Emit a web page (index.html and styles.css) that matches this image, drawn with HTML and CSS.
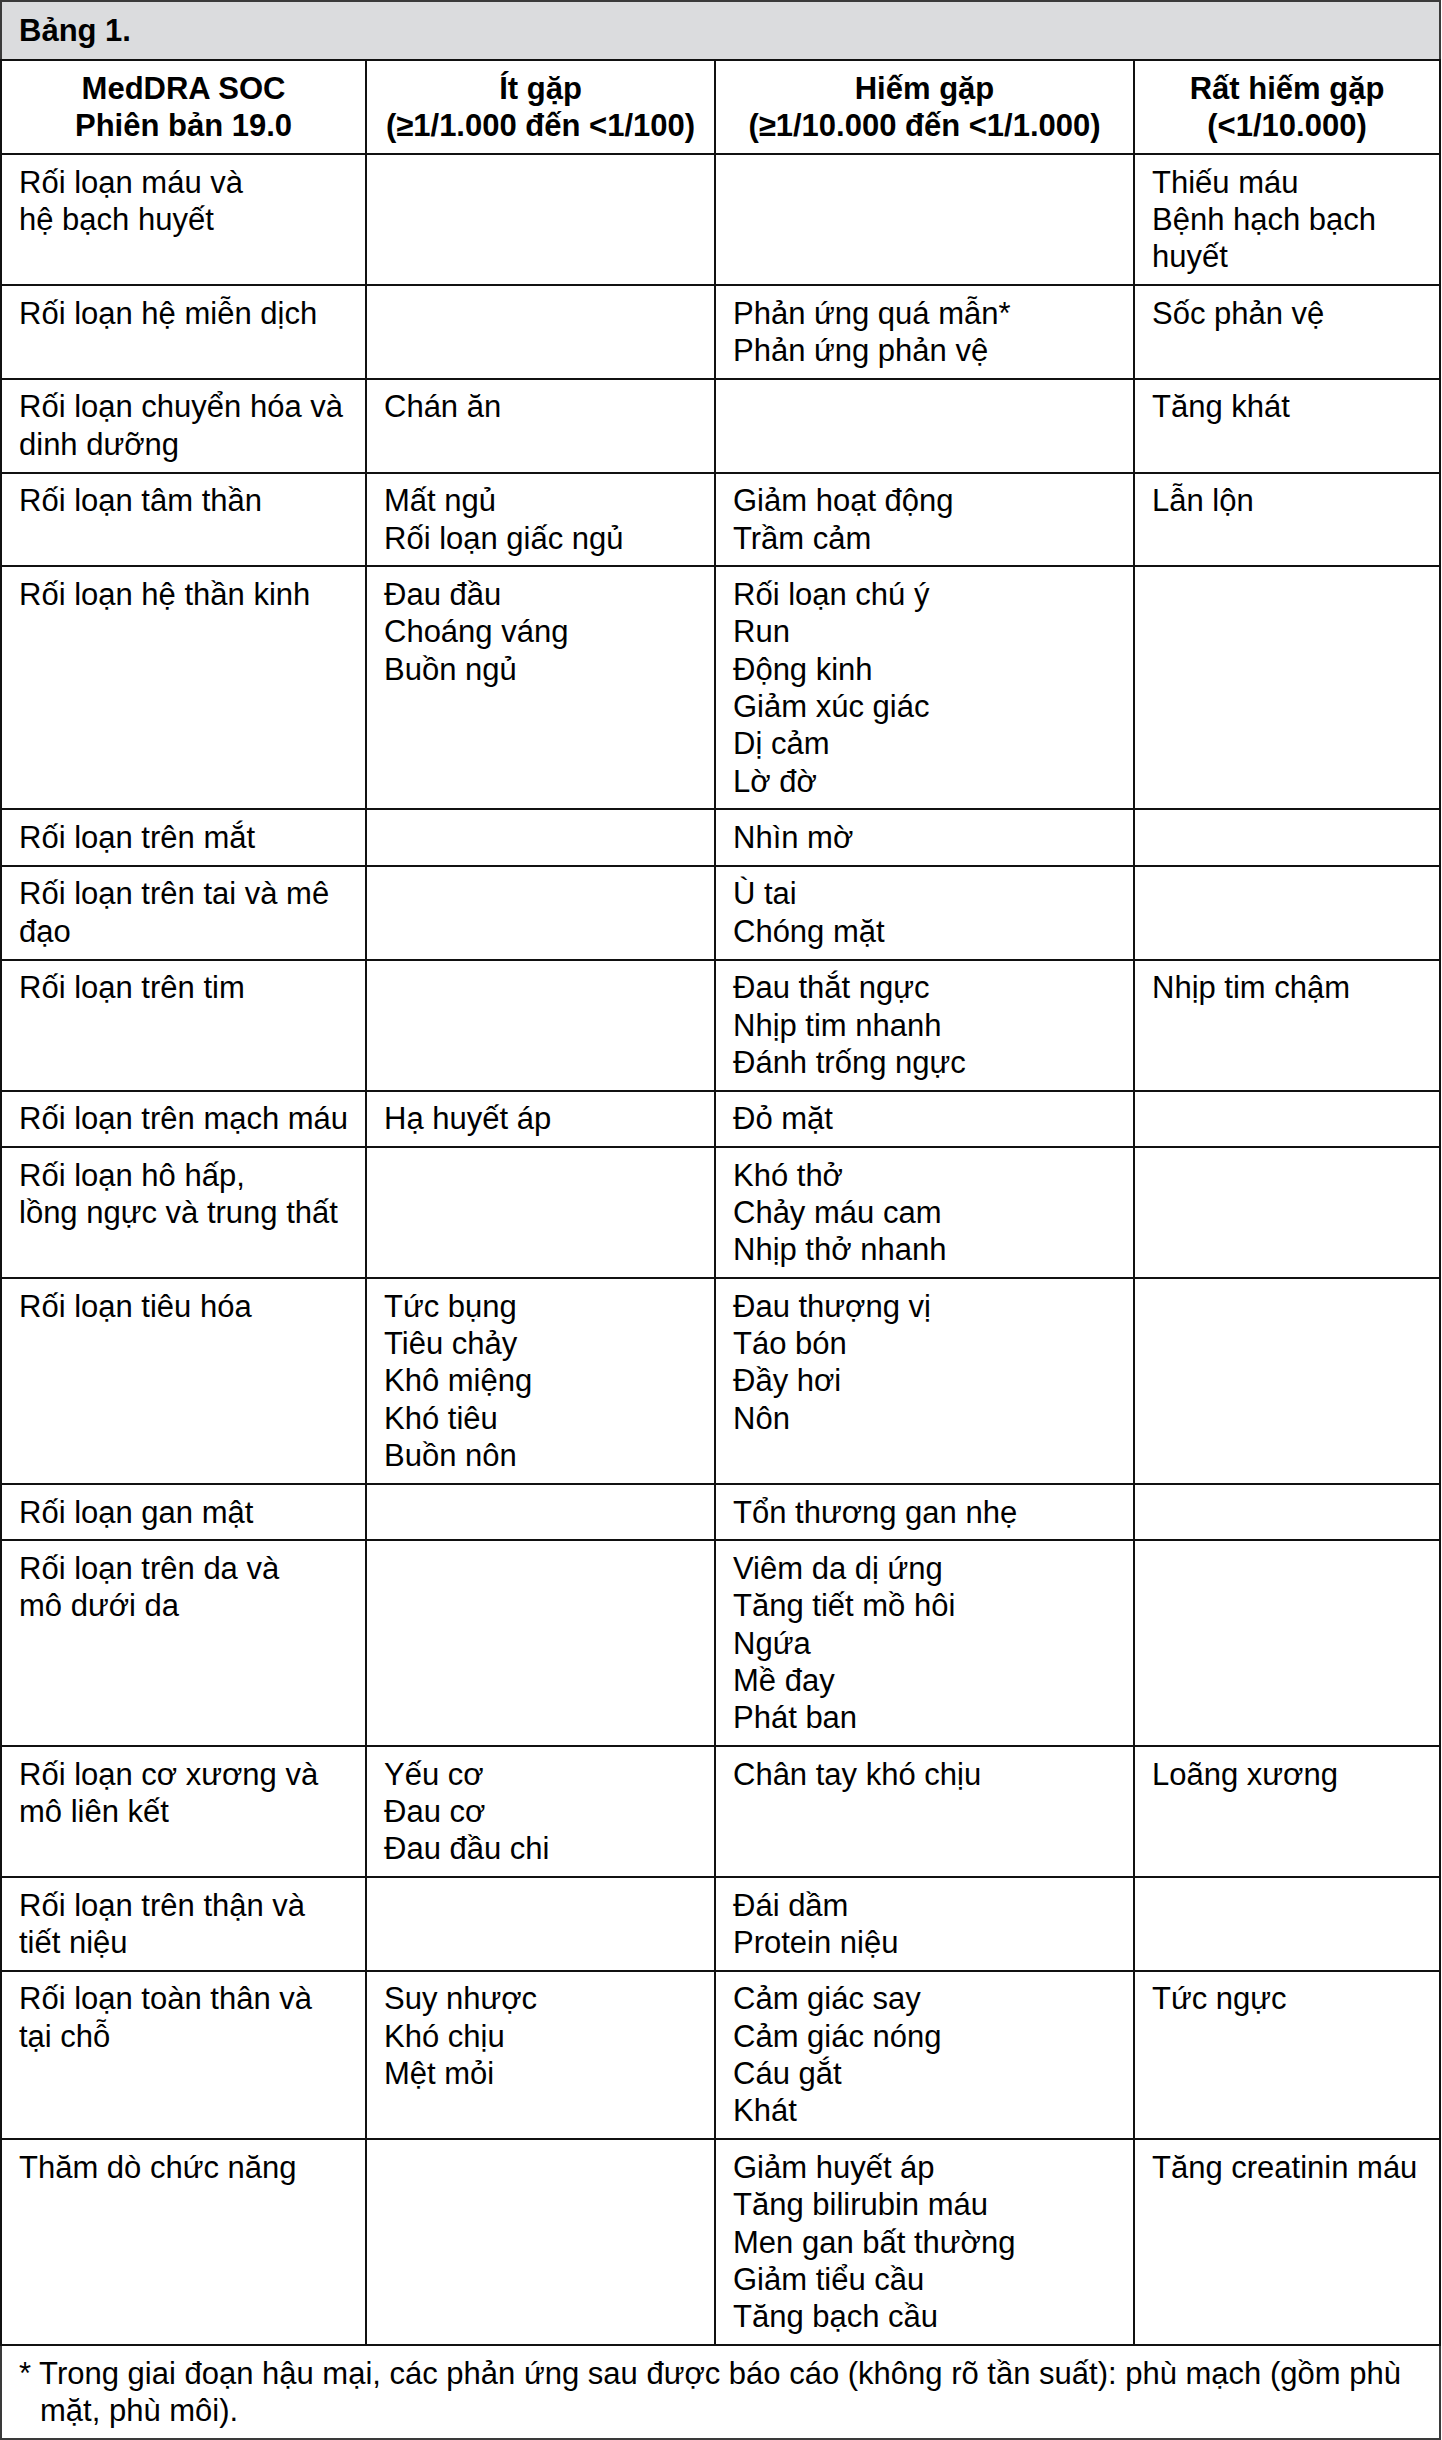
FILE: index.html
```html
<!DOCTYPE html>
<html lang="vi">
<head>
<meta charset="utf-8">
<title>Bảng 1.</title>
<link rel="stylesheet" href="styles.css">
</head>
<body>
<table class="ae-table">
  <colgroup>
    <col class="col-soc">
    <col class="col-uncommon">
    <col class="col-rare">
    <col class="col-very-rare">
  </colgroup>
  <thead>
    <tr class="title-row"><th colspan="4">Bảng 1.</th></tr>
    <tr class="head-row">
      <th>MedDRA SOC<br>Phiên bản 19.0</th>
      <th>Ít gặp<br>(≥1/1.000 đến &lt;1/100)</th>
      <th>Hiếm gặp<br>(≥1/10.000 đến &lt;1/1.000)</th>
      <th>Rất hiếm gặp<br>(&lt;1/10.000)</th>
    </tr>
  </thead>
  <tbody>
    <tr>
      <td>Rối loạn máu và<br>hệ bạch huyết</td>
      <td></td>
      <td></td>
      <td>Thiếu máu<br>Bệnh hạch bạch<br>huyết</td>
    </tr>
    <tr>
      <td>Rối loạn hệ miễn dịch</td>
      <td></td>
      <td>Phản ứng quá mẫn*<br>Phản ứng phản vệ</td>
      <td>Sốc phản vệ</td>
    </tr>
    <tr>
      <td>Rối loạn chuyển hóa và<br>dinh dưỡng</td>
      <td>Chán ăn</td>
      <td></td>
      <td>Tăng khát</td>
    </tr>
    <tr>
      <td>Rối loạn tâm thần</td>
      <td>Mất ngủ<br>Rối loạn giấc ngủ</td>
      <td>Giảm hoạt động<br>Trầm cảm</td>
      <td>Lẫn lộn</td>
    </tr>
    <tr>
      <td>Rối loạn hệ thần kinh</td>
      <td>Đau đầu<br>Choáng váng<br>Buồn ngủ</td>
      <td>Rối loạn chú ý<br>Run<br>Động kinh<br>Giảm xúc giác<br>Dị cảm<br>Lờ đờ</td>
      <td></td>
    </tr>
    <tr>
      <td>Rối loạn trên mắt</td>
      <td></td>
      <td>Nhìn mờ</td>
      <td></td>
    </tr>
    <tr>
      <td>Rối loạn trên tai và mê<br>đạo</td>
      <td></td>
      <td>Ù tai<br>Chóng mặt</td>
      <td></td>
    </tr>
    <tr>
      <td>Rối loạn trên tim</td>
      <td></td>
      <td>Đau thắt ngực<br>Nhịp tim nhanh<br>Đánh trống ngực</td>
      <td>Nhịp tim chậm</td>
    </tr>
    <tr>
      <td class="nowrap">Rối loạn trên mạch máu</td>
      <td>Hạ huyết áp</td>
      <td>Đỏ mặt</td>
      <td></td>
    </tr>
    <tr>
      <td>Rối loạn hô hấp,<br>lồng ngực và trung thất</td>
      <td></td>
      <td>Khó thở<br>Chảy máu cam<br>Nhịp thở nhanh</td>
      <td></td>
    </tr>
    <tr>
      <td>Rối loạn tiêu hóa</td>
      <td>Tức bụng<br>Tiêu chảy<br>Khô miệng<br>Khó tiêu<br>Buồn nôn</td>
      <td>Đau thượng vị<br>Táo bón<br>Đầy hơi<br>Nôn</td>
      <td></td>
    </tr>
    <tr>
      <td>Rối loạn gan mật</td>
      <td></td>
      <td>Tổn thương gan nhẹ</td>
      <td></td>
    </tr>
    <tr>
      <td>Rối loạn trên da và<br>mô dưới da</td>
      <td></td>
      <td>Viêm da dị ứng<br>Tăng tiết mồ hôi<br>Ngứa<br>Mề đay<br>Phát ban</td>
      <td></td>
    </tr>
    <tr>
      <td>Rối loạn cơ xương và<br>mô liên kết</td>
      <td>Yếu cơ<br>Đau cơ<br>Đau đầu chi</td>
      <td>Chân tay khó chịu</td>
      <td>Loãng xương</td>
    </tr>
    <tr>
      <td>Rối loạn trên thận và<br>tiết niệu</td>
      <td></td>
      <td>Đái dầm<br>Protein niệu</td>
      <td></td>
    </tr>
    <tr>
      <td>Rối loạn toàn thân và<br>tại chỗ</td>
      <td>Suy nhược<br>Khó chịu<br>Mệt mỏi</td>
      <td>Cảm giác say<br>Cảm giác nóng<br>Cáu gắt<br>Khát</td>
      <td>Tức ngực</td>
    </tr>
    <tr>
      <td>Thăm dò chức năng</td>
      <td></td>
      <td>Giảm huyết áp<br>Tăng bilirubin máu<br>Men gan bất thường<br>Giảm tiểu cầu<br>Tăng bạch cầu</td>
      <td>Tăng creatinin máu</td>
    </tr>
  </tbody>
  <tfoot>
    <tr class="note-row">
      <td colspan="4">* Trong giai đoạn hậu mại, các phản ứng sau được báo cáo (không rõ tần suất): phù mạch (gồm phù mặt, phù môi).</td>
    </tr>
  </tfoot>
</table>
</body>
</html>
```

FILE: styles.css
```css
html, body {
  margin: 0;
  padding: 0;
  background: #ffffff;
}

.ae-table {
  width: 1441px;
  table-layout: fixed;
  border-collapse: collapse;
  border: 2px solid #3a3a3a;
  font-family: "Liberation Sans", Arial, sans-serif;
  font-size: 31px;
  line-height: 37.33px;
  color: #000000;
}

.col-soc { width: 365px; }
.col-uncommon { width: 349px; }
.col-rare { width: 419px; }
.col-very-rare { width: 306px; }

.ae-table th,
.ae-table td {
  border: 2px solid #111111;
  padding: 8.55px 6px 8.55px 17px;
  vertical-align: top;
  text-align: left;
}

.ae-table td.nowrap {
  white-space: nowrap;
}

.title-row th {
  background: #dbdcde;
  font-weight: bold;
  padding-top: 10px;
  padding-bottom: 10px;
  border-color: #3a3a3a #3a3a3a #111111 #3a3a3a;
}

.head-row th {
  font-weight: bold;
  text-align: center;
  padding-left: 6px;
  padding-right: 6px;
}

.note-row td {
  padding-left: 38px;
  padding-right: 17px;
  text-indent: -21px;
  border-color: #111111 #3a3a3a #3a3a3a #3a3a3a;
}
```
